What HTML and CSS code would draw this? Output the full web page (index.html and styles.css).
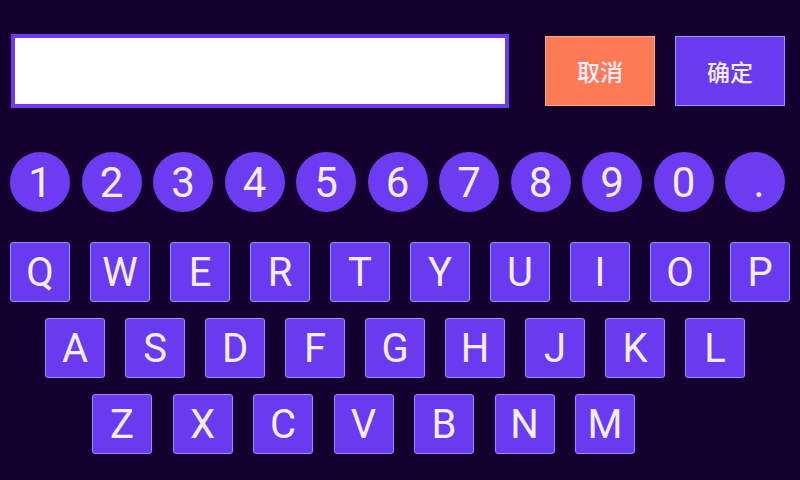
FILE: index.html
```html
<!DOCTYPE html>
<html>
<head>
<meta charset="utf-8">
<link rel="stylesheet" href="styles.css">
</head>
<body>
<div class="screen">
  <div class="top">
    <div class="input"></div>
    <div class="btn cancel">取消</div>
    <div class="btn ok">确定</div>
  </div>
  <div class="digits">
    <div class="dk">1</div><div class="dk">2</div><div class="dk">3</div><div class="dk">4</div><div class="dk">5</div><div class="dk">6</div><div class="dk">7</div><div class="dk">8</div><div class="dk">9</div><div class="dk">0</div><div class="dk dot">.</div>
  </div>
  <div class="row r1">
    <div class="k">Q</div><div class="k">W</div><div class="k">E</div><div class="k">R</div><div class="k">T</div><div class="k">Y</div><div class="k">U</div><div class="k">I</div><div class="k">O</div><div class="k">P</div>
  </div>
  <div class="row r2">
    <div class="k">A</div><div class="k">S</div><div class="k">D</div><div class="k">F</div><div class="k">G</div><div class="k">H</div><div class="k">J</div><div class="k">K</div><div class="k">L</div>
  </div>
  <div class="row r3">
    <div class="k">Z</div><div class="k">X</div><div class="k">C</div><div class="k">V</div><div class="k">B</div><div class="k">N</div><div class="k">M</div>
  </div>
</div>
</body>
</html>
```
FILE: styles.css
```css
html, body {
  margin: 0;
  padding: 0;
  background: #13002f;
}
.screen {
  width: 800px;
  height: 480px;
  overflow: hidden;
  font-family: Roboto, "Noto Sans CJK SC", sans-serif;
  color: #f3eeff;
}
.top {
  display: flex;
  align-items: center;
  padding: 34px 0 0 11px;
  height: 74px;
}
.input {
  width: 490px;
  height: 66px;
  border: 4px solid #6d3af1;
  background: #ffffff;
}
.btn {
  box-sizing: border-box;
  width: 110px;
  height: 70px;
  display: flex;
  align-items: center;
  justify-content: center;
  font-family: "Noto Sans CJK SC", sans-serif;
  font-size: 23px;
  font-weight: 500;
}
.cancel {
  margin-left: 36px;
  background: #ff7b57;
  border: 1px solid #ffa28c;
}
.ok {
  margin-left: 20px;
  background: #6a3af0;
  border: 1px solid #a18efc;
}
.digits {
  display: flex;
  gap: 11.5px;
  padding: 44px 0 0 10px;
}
.dk {
  width: 60px;
  height: 60px;
  border-radius: 50%;
  background: #6d3bf1;
  display: flex;
  align-items: center;
  justify-content: center;
  font-size: 42px;
}
.dot {
  padding-left: 8px;
  box-sizing: border-box;
}
.row {
  display: flex;
  gap: 20px;
}
.r1 { padding: 30px 0 0 10px; }
.r2 { padding: 16px 0 0 45px; }
.r3 { padding: 16px 0 0 92px; gap: 20.5px; }
.k {
  box-sizing: border-box;
  width: 60px;
  height: 60px;
  border: 1px solid #9c88f6;
  border-radius: 3px;
  background: #6a3af0;
  display: flex;
  align-items: center;
  justify-content: center;
  font-size: 40px;
}
```
